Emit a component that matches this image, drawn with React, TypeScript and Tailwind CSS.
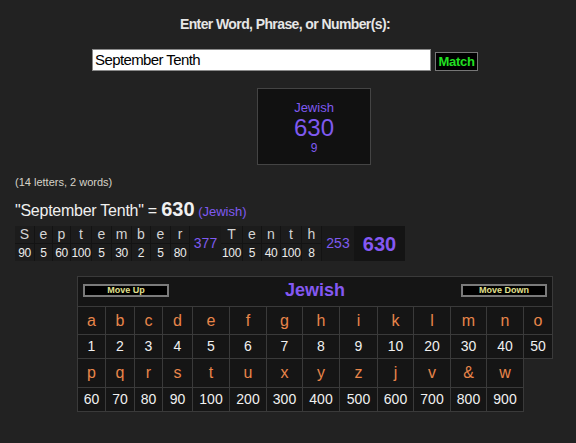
import React from "react";

const FONT = { fontFamily: '"Liberation Sans", Arial, sans-serif' };

// [letter, value, cell width]
const word1: [string, string, number][] = [
  ["S", "90", 20], ["e", "5", 18], ["p", "60", 18], ["t", "100", 21], ["e", "5", 20],
  ["m", "30", 20], ["b", "2", 19], ["e", "5", 20], ["r", "80", 19],
];
const word2: [string, string, number][] = [
  ["T", "100", 22], ["e", "5", 19], ["n", "40", 19], ["t", "100", 21], ["h", "8", 20],
];

const colWidths = [28, 29, 28, 30, 37, 37, 36, 37, 38, 36, 37, 36, 37, 29];

const row1 = [
  ["a", "1"], ["b", "2"], ["c", "3"], ["d", "4"], ["e", "5"], ["f", "6"], ["g", "7"],
  ["h", "8"], ["i", "9"], ["k", "10"], ["l", "20"], ["m", "30"], ["n", "40"], ["o", "50"],
];
const row2 = [
  ["p", "60"], ["q", "70"], ["r", "80"], ["s", "90"], ["t", "100"], ["u", "200"], ["x", "300"],
  ["y", "400"], ["z", "500"], ["j", "600"], ["v", "700"], ["&", "800"], ["w", "900"],
];

function WordCells({ letters }: { letters: [string, string, number][] }) {
  return (
    <>
      {letters.map(([l, n, w], i) => (
        <div key={i} className="flex flex-col" style={{ width: w }}>
          <div className="h-[18px] flex items-center justify-center bg-[#1c1c1c] border-r border-b border-[#131313] text-[14px] text-[#d4d4d4]">
            {l}
          </div>
          <div className="h-[17px] flex items-center justify-center bg-[#1c1c1c] border-r border-[#131313] text-[12px] tracking-[-0.4px] text-[#ececec]">
            {n}
          </div>
        </div>
      ))}
    </>
  );
}

function LetterRows({ cells, rowH }: { cells: string[][]; rowH: [number, number] }) {
  return (
    <>
      <tr style={{ height: rowH[0] }}>
        {cells.map(([l], i) => (
          <td key={i} className="border border-[#3a3a3a] bg-[#151515] text-center text-[16px] text-[#e8854a]">
            {l}
          </td>
        ))}
      </tr>
      <tr style={{ height: rowH[1] }}>
        {cells.map(([, n], i) => (
          <td key={i} className="border border-[#3a3a3a] bg-[#151515] text-center text-[14px] text-[#f0f0f0]">
            {n}
          </td>
        ))}
      </tr>
    </>
  );
}

export default function App() {
  return (
    <div className="w-[576px] h-[443px] bg-[#222222] overflow-hidden" style={FONT}>
      <div className="pt-[16px] w-[570px] text-center text-[14px] leading-[16px] font-bold tracking-[-0.6px] text-[#e6e6e6]">
        Enter Word, Phrase, or Number(s):
      </div>

      <div className="mt-[17px] ml-[92px] flex items-end gap-[4px]">
        <input
          readOnly
          value="September Tenth"
          className="w-[339px] h-[22px] bg-white border border-[#8a8a8a] pl-[2px] text-[15px] tracking-[-0.6px] text-black outline-none"
          style={FONT}
        />
        <button className="h-[19px] w-[43px] bg-black border border-[#777] text-[13px] font-bold tracking-[-0.3px] text-[#22e022] leading-none">
          Match
        </button>
      </div>

      <div className="mt-[17px] ml-[257px] w-[114px] h-[77px] bg-[#111111] border border-[#444] flex flex-col items-center text-[#7f5af0]">
        <div className="mt-[11px] text-[13px] leading-[15px]">Jewish</div>
        <div className="text-[24px] leading-[26px]">630</div>
        <div className="text-[12px] leading-[14px]">9</div>
      </div>

      <div className="mt-[11px] ml-[15px] text-[11px] leading-[13px] text-[#d6d3c8]">
        (14 letters, 2 words)
      </div>

      <div className="mt-[10px] ml-[15px] flex items-baseline leading-[20px] text-[#f0f0f0]">
        <span className="text-[16px] tracking-[-0.25px]">"September Tenth" =&nbsp;</span>
        <span className="text-[20px] font-bold">630</span>
        <span className="text-[13px] text-[#7f5af0]">&nbsp;(Jewish)</span>
      </div>

      <div className="mt-[3px] ml-[15px] inline-flex h-[35px] bg-[#1a1a1a]">
        <WordCells letters={word1} />
        <div className="w-[31px] flex items-center justify-center text-[14px] text-[#7f5af0] bg-[#1a1a1a]">
          377
        </div>
        <WordCells letters={word2} />
        <div className="w-[32px] flex items-center justify-center text-[14px] text-[#7f5af0] bg-[#1a1a1a]">
          253
        </div>
        <div className="w-[51px] flex items-center justify-center text-[20px] font-bold text-[#8458f2] bg-[#141414]">
          630
        </div>
      </div>

      <div className="mt-[15px] ml-[77px]">
        <table className="border-collapse table-fixed" style={{ width: 476 }}>
          <colgroup>
            {colWidths.map((w, i) => (
              <col key={i} style={{ width: w }} />
            ))}
          </colgroup>
          <tbody>
            <tr style={{ height: 30 }}>
              <td colSpan={14} className="border border-[#3a3a3a] bg-[#151515] p-0 align-top">
                <div className="h-[26px] flex items-center justify-between px-[5px]">
                  <button className="w-[86px] h-[13px] bg-black border-2 border-[#7a7a7a] text-[9px] leading-none font-bold text-[#e2e08e]">
                    Move Up
                  </button>
                  <span className="text-[18px] font-bold text-[#8458f2]">Jewish</span>
                  <button className="w-[86px] h-[13px] bg-black border-2 border-[#7a7a7a] text-[9px] leading-none font-bold text-[#e2e08e]">
                    Move Down
                  </button>
                </div>
              </td>
            </tr>
            <LetterRows cells={row1} rowH={[28, 24]} />
            <LetterRows cells={row2} rowH={[29, 24]} />
          </tbody>
        </table>
      </div>
    </div>
  );
}
